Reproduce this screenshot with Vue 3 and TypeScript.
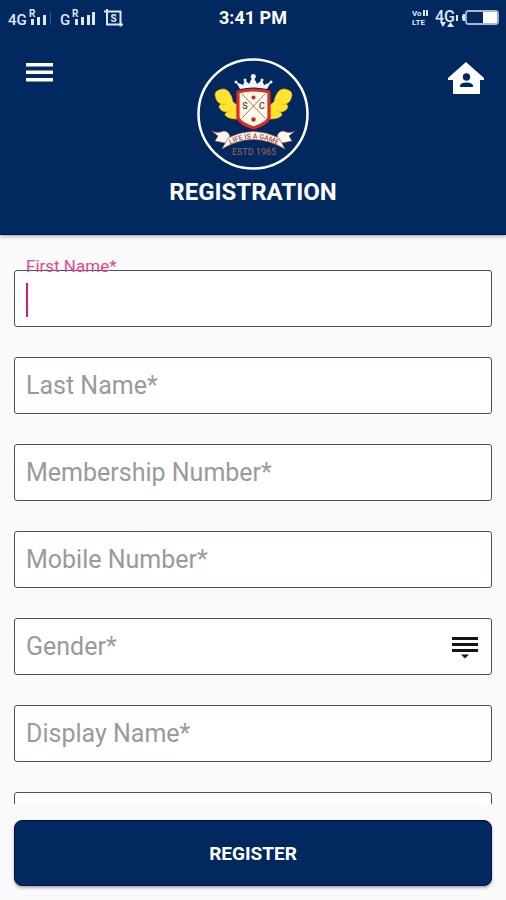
<script setup lang="ts">
import { reactive, ref } from 'vue'

interface Field {
  id: string
  label: string
  kind: 'text' | 'tel' | 'select'
}

const fields: Field[] = [
  { id: 'firstName', label: 'First Name*', kind: 'text' },
  { id: 'lastName', label: 'Last Name*', kind: 'text' },
  { id: 'membership', label: 'Membership Number*', kind: 'text' },
  { id: 'mobile', label: 'Mobile Number*', kind: 'tel' },
  { id: 'gender', label: 'Gender*', kind: 'select' },
  { id: 'displayName', label: 'Display Name*', kind: 'text' },
]

const active = ref('firstName')
const form = reactive<Record<string, string>>({
  firstName: '',
  lastName: '',
  membership: '',
  mobile: '',
  gender: '',
  displayName: '',
  email: '',
})
</script>

<template>
  <div class="screen">
    <header class="header">
      <div class="status">
        <svg class="status-left" viewBox="0 0 130 36" aria-hidden="true">
          <g fill="#dfe8f0">
            <text x="8" y="25" font-size="15" font-weight="500">4G</text>
            <text x="29" y="17" font-size="10" font-weight="700">R</text>
            <path d="M31 19h3v6h-3zM37 17h3v8h-3zM43 15h3v10h-3z" />
            <text x="60" y="25" font-size="15" font-weight="500">G</text>
            <text x="72" y="17" font-size="10" font-weight="700">R</text>
            <path d="M75 19h3v6h-3zM81 17h3v8h-3zM87 15h3v10h-3zM92 12h3v13h-3z" />
            <path d="M50 12h1v13h-1z" opacity="0.25" />
            <text x="113.500" y="22" font-size="10" font-weight="700" text-anchor="middle">S</text>
          </g>
          <path d="M104 11.500h16.500v15M107 9v15.500h16" fill="none" stroke="#dfe8f0" stroke-width="2" />
        </svg>
        <span class="clock">3:41 PM</span>
        <svg class="status-right" viewBox="0 0 96 36" aria-hidden="true">
          <g fill="#dfe8f0">
            <text x="2" y="16" font-size="8" font-weight="700">Vo</text>
            <path d="M13 10h2v6h-2zM16 10h2v6h-2z" />
            <text x="2" y="25" font-size="8" font-weight="700">LTE</text>
            <text x="25" y="22" font-size="16" font-weight="500">4G</text>
            <path d="M30 22h6l-3 5zM37 27l3.500-5 3.500 5zM46 15h2v6h-2z" />
            <path d="M55 14v7h-2q-2-3.500 0-7z" />
            <rect x="73" y="12" width="14" height="11" fill="#fff" />
          </g>
          <rect x="56" y="11" width="32" height="13" rx="2.500" fill="none" stroke="#aeb4cc" stroke-width="1.800" />
        </svg>
      </div>
      <div class="appbar">
        <button class="icon-button menu" type="button" aria-label="Menu">
          <svg width="27" height="20" viewBox="0 0 27 20"><path d="M0 1h27v3.500H0zM0 8.500h27V12H0zM0 16h27v3.500H0z" fill="#fff" /></svg>
        </button>
        <svg class="crest" viewBox="0 0 112 112" role="img" aria-label="Club crest">
          <defs>
            <path id="motto" d="M26 91Q56 70 88 91" />
          </defs>
          <circle cx="56" cy="56" r="54.500" fill="none" stroke="#fff" stroke-width="2.500" />
          <g fill="#ffe32e" stroke="#e5a91f" stroke-width="0.600">
            <path d="M39 61Q31 61 28 57Q28 55 30 54Q24 54 22 49Q22 47 24 46Q19 44 18 37Q18 33 22 32Q28 29 32 34Q35 38 36 44L40 47V61z" />
            <path d="M74 61Q82 61 85 57Q85 55 83 54Q89 54 91 49Q91 47 89 46Q94 44 95 37Q95 33 91 32Q85 29 81 34Q78 38 77 44L73 47V61z" />
            <path d="M24 46Q27 47 29 46M30 54Q33 54 34 52M89 46Q86 47 84 46M83 54Q80 54 79 52" fill="none" />
          </g>
          <g fill="#f1f5fb">
            <path d="M43 31L39 24L46 27L48 22L52 26L56 18L60 26L65 22L67 27L74 24L70 31Q56 28 43 31z" />
            <circle cx="39" cy="24" r="1.500" />
            <circle cx="48" cy="22" r="1.500" />
            <circle cx="56.300" cy="18.500" r="2.500" />
            <circle cx="65" cy="22" r="1.500" />
            <circle cx="74" cy="24" r="1.500" />
          </g>
          <path d="M41 34Q56 30 72 34V60Q69 66 56.500 70Q44 66 41 60z" fill="#fffbe9" stroke="#df2b23" stroke-width="3.200" stroke-linejoin="round" />
          <path d="M45 36L68 60M68 36L45 60" stroke="#8a6a62" stroke-width="0.900" />
          <g fill="#c12d2a">
            <circle cx="56.500" cy="39.500" r="2" />
            <circle cx="56.500" cy="61.500" r="2.200" />
          </g>
          <g fill="#5e4038" font-size="9" font-weight="500" text-anchor="middle">
            <text x="48" y="51">S</text>
            <text x="65" y="51">C</text>
          </g>
          <g fill="#fffaf0" stroke="#b44a42" stroke-width="0.600">
            <path d="M15 73Q20 76 27 73Q33 74 33 80L28 85L18 83L21 78z" />
            <path d="M98 73Q93 76 86 73Q80 74 80 80L85 85L95 83L92 78z" />
            <path d="M31 80Q56 67 82 80L88 91Q56 72 25 91z" />
          </g>
          <text font-size="7" font-weight="500" fill="#a9443d" text-anchor="middle"><textPath href="#motto" startOffset="50%">LIFE IS A GAME</textPath></text>
          <text x="57" y="97" font-size="9" fill="#a5625c" text-anchor="middle">ESTD 1965</text>
        </svg>
        <a class="icon-button home" href="#" aria-label="Home">
          <svg width="36" height="33" viewBox="0 0 36 33">
            <path d="M18 0L36 16V18H32V32H5V18H0V16z" fill="#fff" />
            <circle cx="18.500" cy="15" r="3.700" fill="#01295f" />
            <path d="M12 25V24Q12 20.500 18.500 20.500T25 24V25z" fill="#01295f" />
          </svg>
        </a>
      </div>
      <h1>REGISTRATION</h1>
    </header>

    <main class="fields">
      <div v-for="f in fields" :key="f.id" class="field" :class="{ active: active === f.id || form[f.id] }">
        <select v-if="f.kind === 'select'" :id="f.id" v-model="form[f.id]" @focus="active = f.id">
          <option value=""></option>
          <option>Female</option>
          <option>Male</option>
        </select>
        <input v-else :id="f.id" v-model="form[f.id]" :type="f.kind" @focus="active = f.id" />
        <label :for="f.id">{{ f.label }}</label>
        <svg v-if="f.kind === 'select'" class="picker" viewBox="0 0 26 22" aria-hidden="true">
          <path d="M0 0h26v3H0zM0 6h26v3H0zM0 12h26v3H0zM9 17.500h8l-4 4z" fill="#151515" />
        </svg>
        <span v-if="active === f.id && !form[f.id]" class="caret"></span>
      </div>
      <div class="field">
        <input v-model="form.email" type="email" aria-label="Email" @focus="active = 'email'" />
      </div>
    </main>

    <footer class="footer">
      <button class="register" type="button">REGISTER</button>
    </footer>
  </div>
</template>

<style>
body {
  margin: 0;
  background: #fafafa;
}
</style>

<style scoped>
.screen {
  height: 100vh;
  display: flex;
  flex-direction: column;
  overflow: hidden;
  font-family: Roboto, "Liberation Sans", sans-serif;
}
.header {
  flex: none;
  background: #01295f;
  color: #fff;
  padding-bottom: 28px;
  border-bottom: 1px solid #00104f;
  box-shadow: 0 1px 4px rgba(0, 0, 0, 0.4);
}
.status {
  display: grid;
  grid-template-columns: 1fr auto 1fr;
  align-items: center;
  height: 36px;
}
.status-left {
  width: 130px;
  height: 36px;
}
.status-right {
  width: 96px;
  height: 36px;
  justify-self: end;
}
.clock {
  font-size: 18px;
  font-weight: 700;
  line-height: 36px;
}
.appbar {
  display: grid;
  grid-template-columns: 1fr 112px 1fr;
  align-items: start;
  padding: 22px 22px 0;
}
.icon-button {
  display: flex;
  border: 0;
  background: none;
  padding: 4px;
}
.menu {
  justify-self: start;
}
.home {
  justify-self: end;
  padding: 4px 0;
}
.crest {
  width: 112px;
  height: 112px;
}
h1 {
  margin: 8px 0 0;
  text-align: center;
  font-size: 24px;
  line-height: 28px;
  font-weight: 700;
}
.fields {
  flex: 1;
  min-height: 0;
  overflow: hidden;
  display: flex;
  flex-direction: column;
  gap: 30px;
  padding: 35px 14px 0;
}
.field {
  position: relative;
  flex: none;
  height: 57px;
}
.field label {
  position: absolute;
  left: 12px;
  top: 0;
  font-size: 25px;
  line-height: 57px;
  color: #9a9a9a;
  pointer-events: none;
}
.field.active label {
  top: -14px;
  font-size: 17px;
  line-height: 20px;
  color: #e04a8a;
}
input,
select {
  display: block;
  width: 100%;
  height: 100%;
  box-sizing: border-box;
  border: 1px solid #3c5270;
  border-radius: 3px;
  background: #fff;
  padding: 0 12px;
  font: inherit;
  font-size: 25px;
  appearance: none;
  outline: 0;
  caret-color: #d81b70;
}
.picker {
  position: absolute;
  right: 14px;
  top: 19px;
  width: 26px;
  height: 22px;
  pointer-events: none;
}
.caret {
  position: absolute;
  left: 12px;
  top: 13px;
  width: 2px;
  height: 34px;
  background: #d81b70;
  pointer-events: none;
}
.footer {
  flex: none;
  padding: 16px 14px 14px;
}
.register {
  display: block;
  width: 100%;
  height: 66px;
  border: 1px solid #00104f;
  border-radius: 8px;
  background: #01295f;
  color: #fff;
  font: inherit;
  font-size: 19px;
  font-weight: 700;
  box-shadow: 0 2px 3px rgba(0, 0, 0, 0.3);
}
</style>
